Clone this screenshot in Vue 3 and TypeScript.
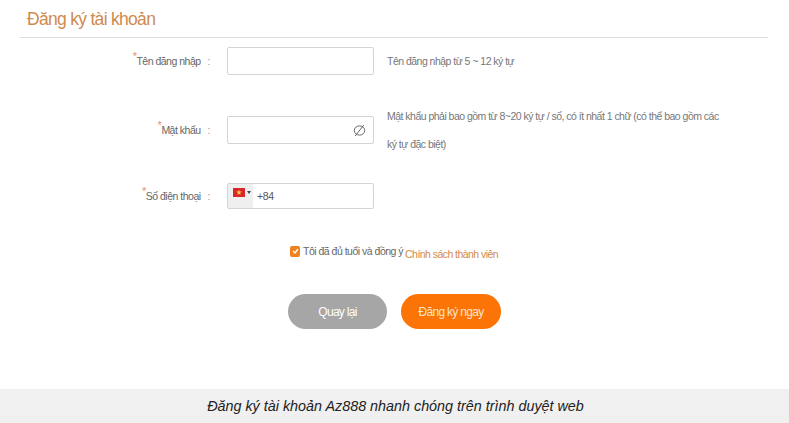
<template>
  <div class="page">
    <main class="content">
      <h1 class="title">Đăng ký tài khoản</h1>
      <form class="form" @submit.prevent>
        <div class="row row-user">
          <label class="label"><span class="star">*</span>Tên đăng nhập<span class="colon">:</span></label>
          <div class="field"></div>
          <p class="hint">Tên đăng nhập từ 5 ~ 12 ký tự</p>
        </div>

        <div class="row row-pass">
          <label class="label"><span class="star">*</span>Mật khẩu<span class="colon">:</span></label>
          <div class="field field-pass">
            <svg class="eye" width="13" height="13" viewBox="0 0 13 13" fill="none" stroke="#666" stroke-width="1">
              <ellipse cx="6.5" cy="6.5" rx="5.2" ry="4.6" />
              <path d="M2.2 12 10.8 1" />
            </svg>
          </div>
          <p class="hint hint-long">Mật khẩu phải bao gồm từ 8~20 ký tự / số, có ít nhất 1 chữ (có thể bao gồm các ký tự đặc biệt)</p>
        </div>

        <div class="row row-phone">
          <label class="label"><span class="star">*</span>Số điện thoại<span class="colon">:</span></label>
          <div class="field field-phone">
            <div class="flag-box">
              <svg width="12" height="9" viewBox="0 0 12 9">
                <rect width="12" height="9" fill="#d8262c" />
                <path d="M6 1.6 6.7 3.6H8.8L7.1 4.9 7.7 6.9 6 5.7 4.3 6.9 4.9 4.9 3.2 3.6H5.3Z" fill="#f7d038" />
              </svg>
              <span class="caret"></span>
            </div>
            <span class="dial">+84</span>
          </div>
        </div>

        <div class="agree">
          <span class="check">
            <svg width="7" height="6" viewBox="0 0 7 6" fill="none" stroke="#fff" stroke-width="1.3">
              <path d="M1 3 3 5 6 1" />
            </svg>
          </span>
          <span class="agree-text">Tôi đã đủ tuổi và đồng ý</span>
          <a class="policy">Chính sách thành viên</a>
        </div>

        <div class="actions">
          <button type="button" class="btn btn-back">Quay lại</button>
          <button type="submit" class="btn btn-go">Đăng ký ngay</button>
        </div>
      </form>
    </main>
    <footer class="caption">Đăng ký tài khoản Az888 nhanh chóng trên trình duyệt web</footer>
  </div>
</template>

<script setup lang="ts">
</script>

<style>
html, body {
  margin: 0;
  background: #fff;
}
</style>

<style scoped>
.page {
  width: 789px;
  height: 423px;
  display: flex;
  flex-direction: column;
  overflow: hidden;
  font-family: "Liberation Sans", Arial, sans-serif;
  color: #666;
}

.content {
  flex: 1;
  padding: 0 21px 0 20px;
}

.title {
  margin: 0;
  padding-left: 7px;
  box-sizing: border-box;
  border-bottom: 1px solid #ddd;
  height: 38px;
  font-size: 17.5px;
  letter-spacing: -0.7px;
  font-weight: 400;
  line-height: 38px;
  color: #cf8a4f;
}

.form {
  padding-top: 9px;
}

.row {
  display: flex;
  align-items: center;
}
.row-pass { margin-top: 27px; }
.row-phone { margin-top: 25px; }

.label {
  width: 190px;
  flex: none;
  text-align: right;
  font-size: 10.5px;
  letter-spacing: -0.5px;
  color: #666;
}
.star {
  color: #e8906a;
  font-size: 11px;
  position: relative;
  top: -5px;
}
.colon {
  display: inline-block;
  margin-left: 7px;
  color: #999;
}

.field {
  box-sizing: border-box;
  width: 147px;
  height: 28px;
  margin-left: 17px;
  flex: none;
  border: 1px solid #d4d4d4;
  border-radius: 2px;
  background: #fff;
}
.field-pass {
  display: flex;
  align-items: center;
  justify-content: flex-end;
  padding-right: 7px;
}
.field-phone {
  height: 26px;
  display: flex;
  align-items: center;
}

.flag-box {
  width: 25px;
  height: 100%;
  background: #efefef;
  display: flex;
  align-items: flex-start;
  gap: 2px;
  padding: 4px 0 0 5px;
  box-sizing: border-box;
}
.caret {
  margin-top: 3px;
  border-left: 2px solid transparent;
  border-right: 2px solid transparent;
  border-top: 3px solid #444;
}
.dial {
  margin-left: 4px;
  font-size: 10.5px;
  letter-spacing: -0.3px;
  color: #555;
}

.hint {
  margin: 0 0 0 13px;
  font-size: 10.5px;
  letter-spacing: -0.52px;
  color: #777;
}
.hint-long {
  width: 336px;
  line-height: 28px;
}

.agree {
  display: flex;
  align-items: center;
  margin-top: 36px;
  margin-left: 270px;
  font-size: 10.5px;
  letter-spacing: -0.5px;
}
.check {
  width: 10px;
  height: 11px;
  border-radius: 2px;
  background: #f08020;
  display: flex;
  align-items: center;
  justify-content: center;
  margin-right: 3px;
}
.agree-text {
  color: #666;
}
.policy {
  margin-left: 2px;
  position: relative;
  top: 3px;
  letter-spacing: -0.55px;
  color: #d08a4c;
}

.actions {
  display: flex;
  gap: 14px;
  margin-top: 37px;
  margin-left: 268px;
}
.btn {
  width: 100px;
  height: 35px;
  border: none;
  border-radius: 18px;
  font-family: inherit;
  font-size: 12px;
  letter-spacing: -0.7px;
  color: #fff;
  padding: 0;
}
.btn-back {
  width: 99px;
  background: #a6a6a6;
}
.btn-go {
  background: #fb7405;
  color: #fbe3cc;
}

.caption {
  flex: none;
  height: 34px;
  line-height: 34px;
  padding-left: 2px;
  background: #f0f0f0;
  text-align: center;
  font-size: 14.35px;
  font-style: italic;
  color: #222;
}
</style>
